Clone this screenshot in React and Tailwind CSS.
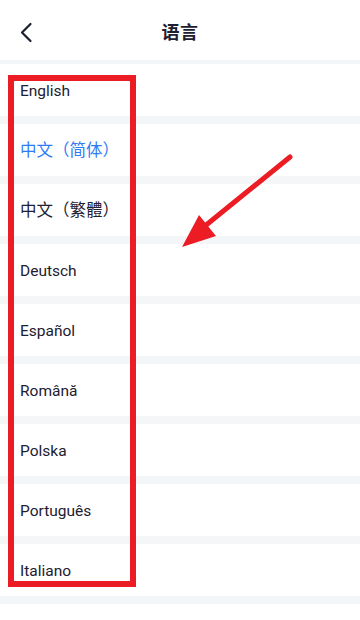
const languages = [
  { name: "English" },
  { name: "中文（简体）", active: true, cjk: true },
  { name: "中文（繁體）", cjk: true },
  { name: "Deutsch" },
  { name: "Español" },
  { name: "Română" },
  { name: "Polska" },
  { name: "Português" },
  { name: "Italiano" },
];

function Arrow() {
  return (
    <svg
      className="absolute left-0 top-0 pointer-events-none"
      width="360"
      height="620"
      viewBox="0 0 360 620"
    >
      <line
        x1="290"
        y1="157"
        x2="200"
        y2="230"
        stroke="#ec1c24"
        strokeWidth="5"
        strokeLinecap="round"
      />
      <polygon points="182,247 199,215 216,236" fill="#ec1c24" />
    </svg>
  );
}

export default function App() {
  return (
    <div
      className="relative w-[360px] h-[620px] overflow-hidden bg-white text-[#1d2030]"
      style={{ fontFamily: "Roboto, 'Noto Sans CJK SC', sans-serif" }}
    >
      <header className="h-[60px] flex items-center justify-center relative pt-[5px]">
        <button className="absolute left-[18px] top-[22px]">
          <svg width="16" height="21" viewBox="0 0 16 21" fill="none">
            <polyline
              points="12.5,2 4,10.5 12.5,19"
              stroke="#1d2030"
              strokeWidth="2.2"
              strokeLinecap="round"
              strokeLinejoin="round"
            />
          </svg>
        </button>
        <h1 className="text-[18px] font-bold tracking-[0.5px]">语言</h1>
      </header>
      <div className="h-[4px] bg-[#f5f6f8]" />

      <ul>
        {languages.map((lang) => (
          <li key={lang.name}>
            <div
              className={`h-[52px] flex items-center pl-[20px] pt-[3px] ${
                lang.cjk ? "text-[16.5px]" : "text-[15.5px]"
              } ${lang.active ? "text-[#2f7bf5]" : "text-[#1d2030]"}`}
            >
              {lang.name}
            </div>
            <div className="h-[8px] bg-[#f5f6f8]" />
          </li>
        ))}
      </ul>

      {/* highlight box */}
      <div className="absolute left-[8px] top-[75px] w-[128px] h-[512px] border-[6px] border-[#ec1c24]" />
      <Arrow />
    </div>
  );
}
